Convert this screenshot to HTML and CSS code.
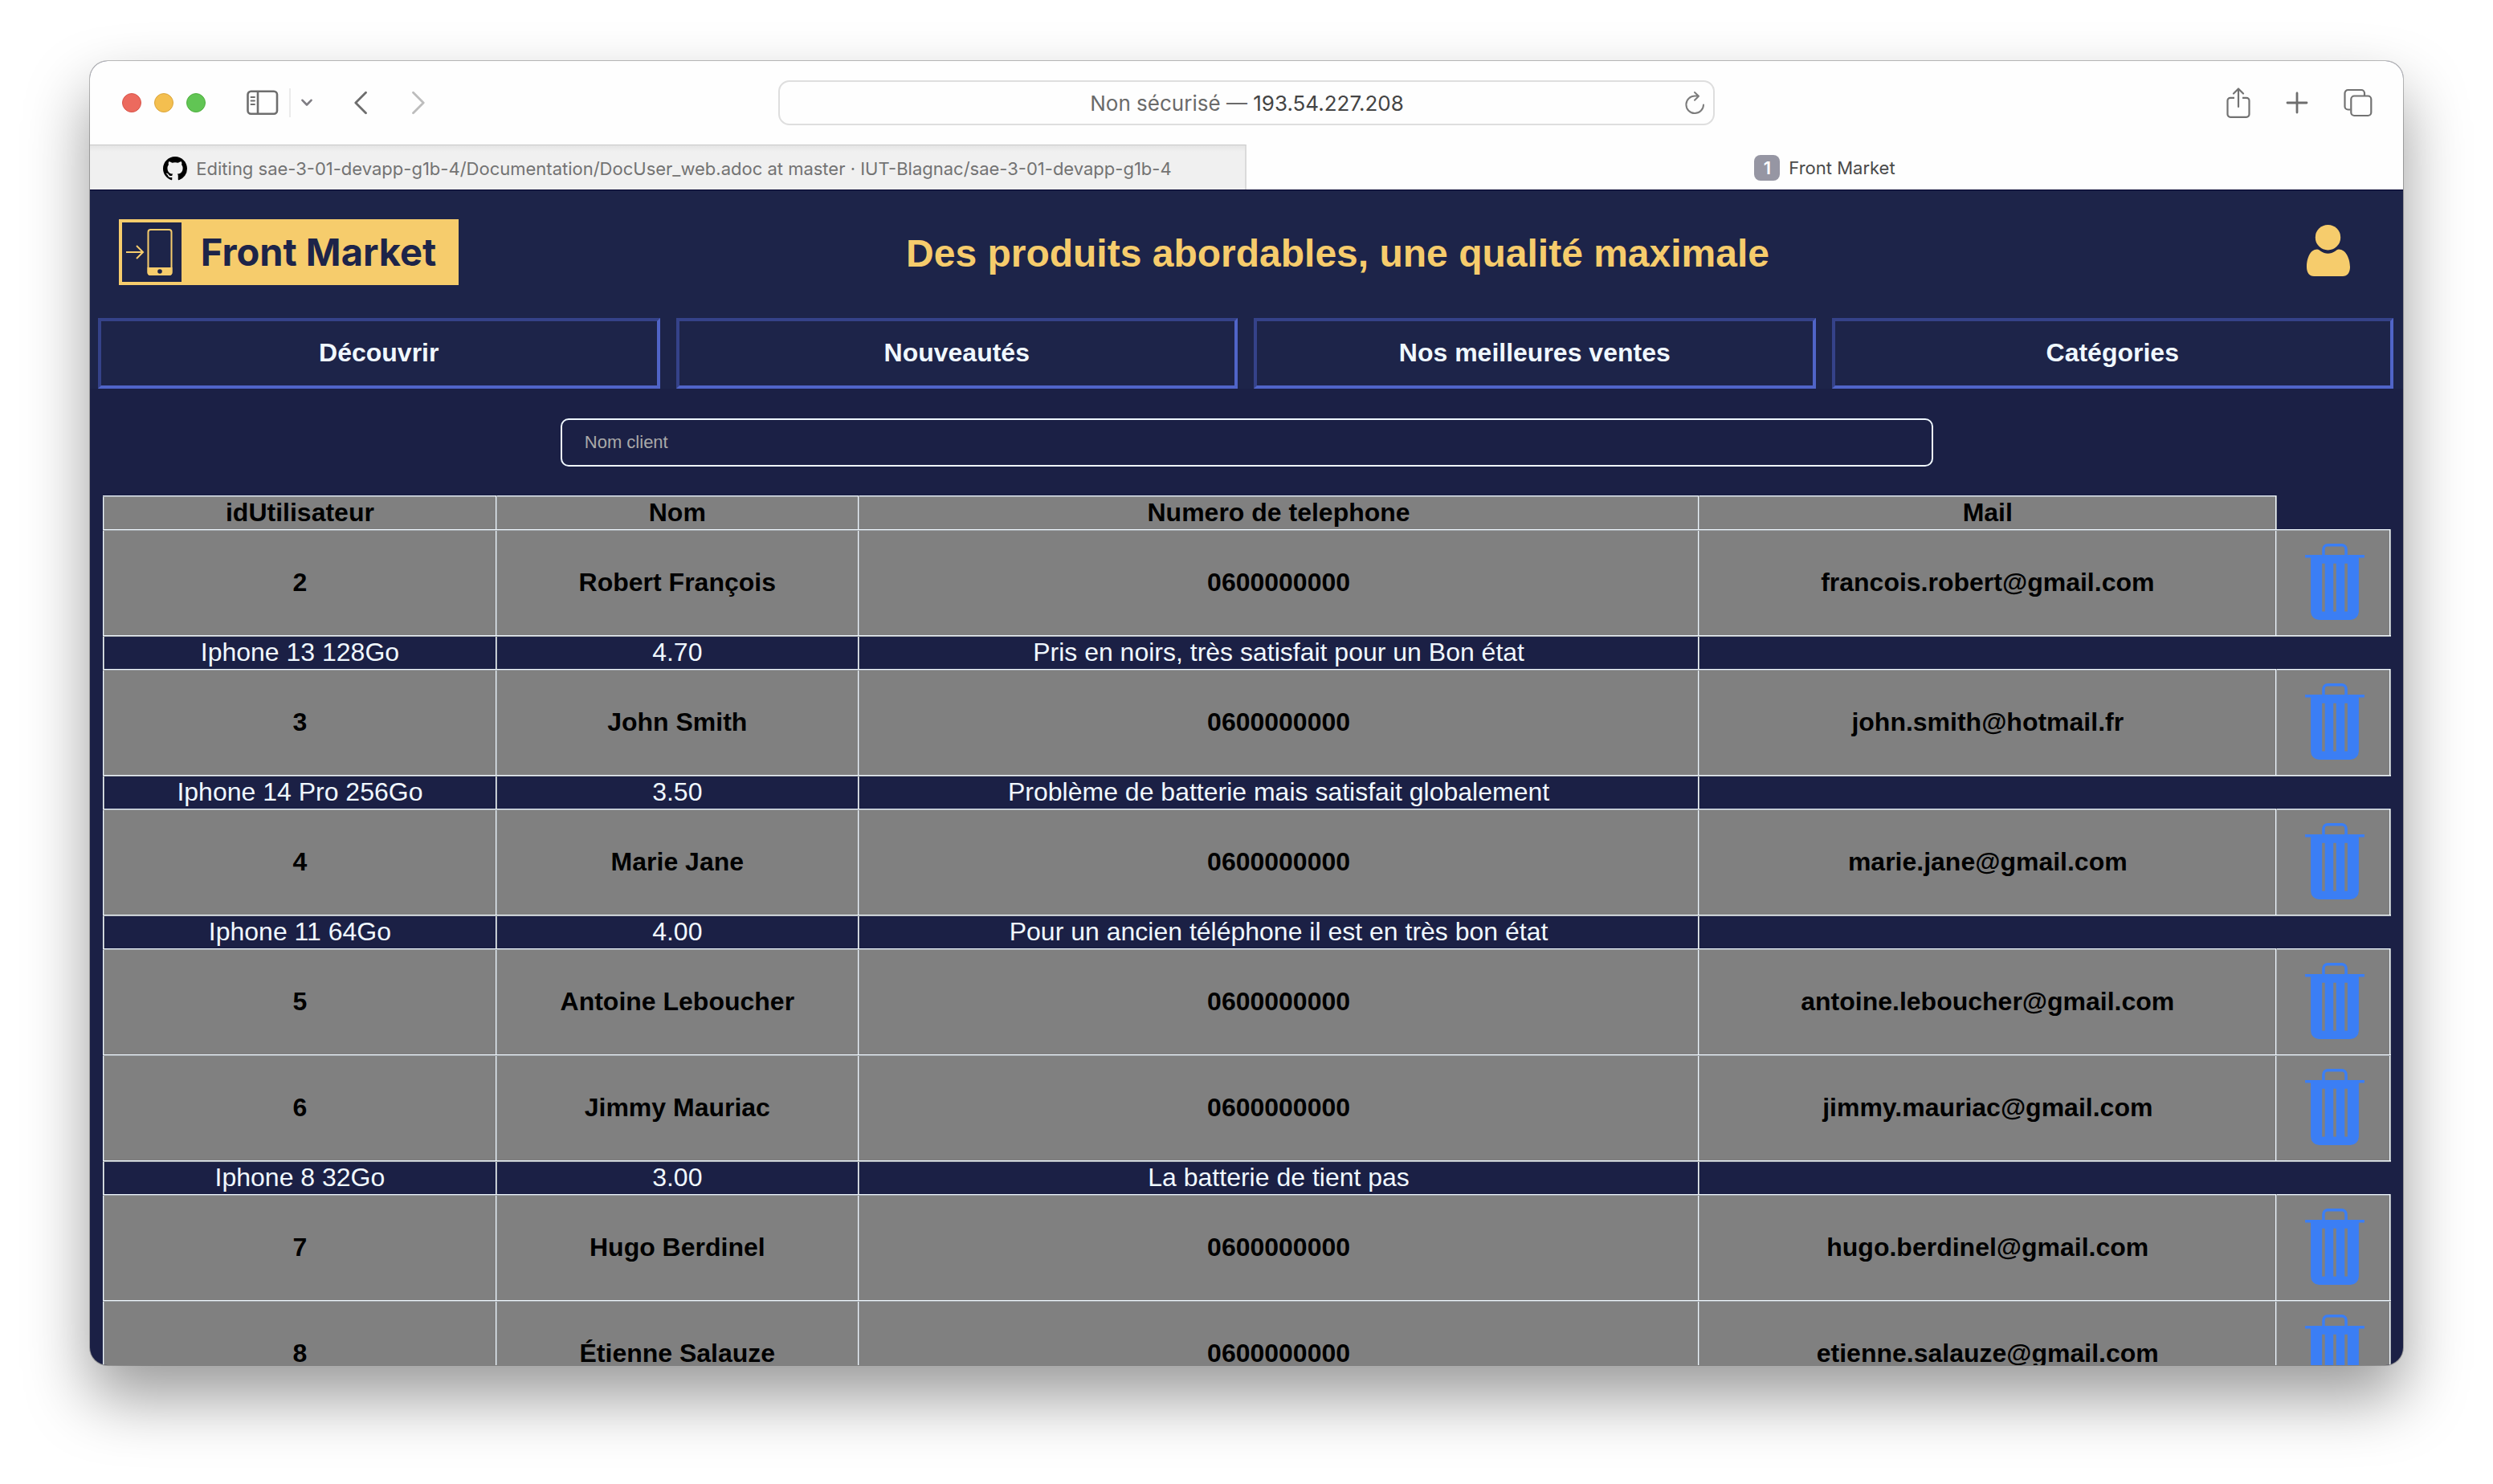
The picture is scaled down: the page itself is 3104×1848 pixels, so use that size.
FILE: index.html
```html
<!DOCTYPE html>
<html lang="fr">
<head>
<meta charset="utf-8">
<title>Front Market</title>
<link rel="stylesheet" href="styles.css">
</head>
<body>
<svg class="defs" aria-hidden="true">
  <symbol id="trash" viewBox="0 0 21 27">
    <path fill-rule="evenodd" d="M6 4V2a2 2 0 0 1 2-2h5a2 2 0 0 1 2 2v2h6v1h-2v19a3 3 0 0 1-3 3H5a3 3 0 0 1-3-3V5H0V4zM7 4h7V2a1 1 0 0 0-1-1H8a1 1 0 0 0-1 1zM6 7v17h1V7zM10 7v17h1V7zM14 7v17h1V7z"/>
  </symbol>
</svg>
<div class="window">
  <div class="toolbar">
    <div class="tools-left">
      <span class="lights"><i class="light red"></i><i class="light yellow"></i><i class="light green"></i></span>
      <button class="tool sidebar" aria-label="Barre latérale"><svg width="40" height="32" viewBox="0 0 40 32" fill="none" stroke="#6e6e6e" stroke-width="2.6"><rect x="1.5" y="1.8" width="36.5" height="28" rx="4"/><path d="M14 2v28"/><path d="M5.500 9h4.500M5.500 13.500h4.500M5.500 18h4.500" stroke-width="1.800" stroke-linecap="round"/></svg></button>
      <span class="divider"></span>
      <button class="tool chevron" aria-label="Groupes d'onglets"><svg width="14" height="10" viewBox="0 0 14 10" fill="none" stroke="#7f7d83" stroke-width="2.600" stroke-linecap="round" stroke-linejoin="round"><path d="M1.500 1.800L7 7.500l5.500-5.700"/></svg></button>
      <button class="tool back" aria-label="Précédent"><svg width="16" height="30" viewBox="0 0 16 30" fill="none" stroke="#6e6e6e" stroke-width="2.800" stroke-linecap="round" stroke-linejoin="round"><path d="M14.500 2.200L1.800 15l12.700 12.800"/></svg></button>
      <button class="tool forward" aria-label="Suivant"><svg width="16" height="30" viewBox="0 0 16 30" fill="none" stroke="#bdbdbd" stroke-width="2.800" stroke-linecap="round" stroke-linejoin="round"><path d="M1.500 2.200L14.200 15 1.500 27.800"/></svg></button>
    </div>
    <div class="address">
      <span class="url">Non sécurisé — <b>193.54.227.208</b></span>
      <button class="tool reload" aria-label="Actualiser"><svg width="26" height="30" viewBox="0 0 26 30" fill="none" stroke="#7c7c7c" stroke-width="2" stroke-linecap="round" stroke-linejoin="round"><path d="M23 17.500A10.800 10.800 0 1 1 12.500 6.500h4.500M12 2l5 4.700-5 5"/></svg></button>
    </div>
    <div class="tools-right">
      <button class="tool" aria-label="Partager"><svg width="30" height="38" viewBox="0 0 30 38" fill="none" stroke="#727272" stroke-width="2.200" stroke-linecap="round" stroke-linejoin="round"><path d="M10 12.800H5a3.500 3.500 0 0 0-3.500 3.500v17a3.500 3.500 0 0 0 3.500 3.500h20a3.500 3.500 0 0 0 3.500-3.500v-17a3.500 3.500 0 0 0-3.500-3.500h-5" stroke-linecap="butt"/><path d="M15 24V2M9 7.500L15 1.500l6 6"/></svg></button>
      <button class="tool" aria-label="Nouvel onglet"><svg width="28" height="28" viewBox="0 0 28 28" fill="none" stroke="#6e6e6e" stroke-width="2.800" stroke-linecap="round"><path d="M14 2v24M2 14h24"/></svg></button>
      <button class="tool" aria-label="Vue d'ensemble des onglets"><svg width="36" height="36" viewBox="0 0 36 36" fill="none" stroke="#727272" stroke-width="2.200"><rect x="9.300" y="9.500" width="25" height="24.500" rx="4"/><path d="M8.500 26.500H5.500a4 4 0 0 1-4-4V6a4 4 0 0 1 4-4h16.500a4 4 0 0 1 4 4v3"/></svg></button>
    </div>
  </div>
  <div class="tabs">
    <a class="tab inactive" href="#"><svg width="30" height="30" viewBox="0 0 16 16"><path d="M8 0C3.580 0 0 3.580 0 8c0 3.540 2.290 6.530 5.470 7.590.4.070.55-.17.55-.38 0-.19-.01-.82-.01-1.490-2.010.37-2.530-.49-2.690-.94-.09-.23-.48-.94-.82-1.130-.28-.15-.68-.52-.01-.53.63-.01 1.080.58 1.230.82.72 1.210 1.870.87 2.330.66.07-.52.28-.87.51-1.070-1.780-.2-3.640-.89-3.640-3.950 0-.87.31-1.590.82-2.150-.08-.2-.36-1.020.08-2.120 0 0 .67-.21 2.200.82.64-.18 1.320-.27 2-.27s1.360.09 2 .27c1.530-1.040 2.200-.82 2.200-.82.44 1.100.16 1.920.08 2.120.51.56.82 1.270.82 2.150 0 3.070-1.870 3.750-3.650 3.950.29.25.54.73.54 1.480 0 1.070-.01 1.930-.01 2.200 0 .21.15.46.55.38A8.010 8.010 0 0 0 16 8c0-4.420-3.580-8-8-8z"/></svg><span>Editing sae-3-01-devapp-g1b-4/Documentation/DocUser_web.adoc at master · IUT-Blagnac/sae-3-01-devapp-g1b-4</span></a>
    <a class="tab" href="#"><span class="badge">1</span><span>Front Market</span></a>
  </div>
  <div class="page">
    <header>
      <div class="banner">
        <a class="logo" href="#"><svg width="74" height="74" viewBox="0 0 74 74" fill="none" stroke="#f6cc6c" stroke-width="2"><path d="M5 37h21M18 29l8 8-8 8"/><rect x="32.500" y="9" width="29" height="56" rx="3"/><path d="M32.500 57h29v5a3 3 0 0 1-3 3h-23a3 3 0 0 1-3-3z" fill="#f6cc6c"/><circle cx="47" cy="61" r="2.800" fill="#1d2449" stroke="none"/></svg><span>Front Market</span></a>
        <h1>Des produits abordables, une qualité maximale</h1>
        <a class="account" href="#" aria-label="Compte"><svg width="54" height="64" viewBox="0 0 54 64" fill="#f6cc6c"><circle cx="26.500" cy="15.700" r="15.700"/><path d="M13 30.500c2 0 3 1.200 4.500 2.300 5.500 4 12.500 4 18 0 1.500-1.100 2.500-2.300 4.500-2.300 9 0 14 12 14 22 0 7-3.500 11.500-9 11.500H9c-5.500 0-9-4.500-9-11.500 0-10 4-22 13-22z"/></svg></a>
      </div>
      <nav>
        <a href="#">Découvrir</a>
        <a href="#">Nouveautés</a>
        <a href="#">Nos meilleures ventes</a>
        <a href="#">Catégories</a>
      </nav>
    </header>
    <main>
      <input class="search" type="text" placeholder="Nom client" aria-label="Nom client">
      <table>
        <colgroup><col class="c-id"><col class="c-name"><col class="c-phone"><col class="c-mail"><col class="c-del"></colgroup>
        <tr class="head"><th>idUtilisateur</th><th>Nom</th><th>Numero de telephone</th><th>Mail</th></tr>
        <tr class="user"><th>2</th><th>Robert François</th><th>0600000000</th><th>francois.robert@gmail.com</th><th class="action"><button class="del" aria-label="Supprimer"><svg width="74" height="95"><use href="#trash"/></svg></button></th></tr>
        <tr class="review"><td>Iphone 13 128Go</td><td>4.70</td><td>Pris en noirs, très satisfait pour un Bon état</td></tr>
        <tr class="user"><th>3</th><th>John Smith</th><th>0600000000</th><th>john.smith@hotmail.fr</th><th class="action"><button class="del" aria-label="Supprimer"><svg width="74" height="95"><use href="#trash"/></svg></button></th></tr>
        <tr class="review"><td>Iphone 14 Pro 256Go</td><td>3.50</td><td>Problème de batterie mais satisfait globalement</td></tr>
        <tr class="user"><th>4</th><th>Marie Jane</th><th>0600000000</th><th>marie.jane@gmail.com</th><th class="action"><button class="del" aria-label="Supprimer"><svg width="74" height="95"><use href="#trash"/></svg></button></th></tr>
        <tr class="review"><td>Iphone 11 64Go</td><td>4.00</td><td>Pour un ancien téléphone il est en très bon état</td></tr>
        <tr class="user"><th>5</th><th>Antoine Leboucher</th><th>0600000000</th><th>antoine.leboucher@gmail.com</th><th class="action"><button class="del" aria-label="Supprimer"><svg width="74" height="95"><use href="#trash"/></svg></button></th></tr>
        <tr class="user"><th>6</th><th>Jimmy Mauriac</th><th>0600000000</th><th>jimmy.mauriac@gmail.com</th><th class="action"><button class="del" aria-label="Supprimer"><svg width="74" height="95"><use href="#trash"/></svg></button></th></tr>
        <tr class="review"><td>Iphone 8 32Go</td><td>3.00</td><td>La batterie de tient pas</td></tr>
        <tr class="user"><th>7</th><th>Hugo Berdinel</th><th>0600000000</th><th>hugo.berdinel@gmail.com</th><th class="action"><button class="del" aria-label="Supprimer"><svg width="74" height="95"><use href="#trash"/></svg></button></th></tr>
        <tr class="user"><th>8</th><th>Étienne Salauze</th><th>0600000000</th><th>etienne.salauze@gmail.com</th><th class="action"><button class="del" aria-label="Supprimer"><svg width="74" height="95"><use href="#trash"/></svg></button></th></tr>
      </table>
    </main>
  </div>
</div>
</body>
</html>
```
FILE: styles.css
```css
* { box-sizing: border-box; }

body {
  margin: 0;
  height: 100vh;
  padding: 76px 112px 148px;
  overflow: hidden;
  background: #fff;
  font-family: "Liberation Sans", Arial, sans-serif;
}

a { color: inherit; text-decoration: none; }
svg { display: block; }
.defs { position: absolute; width: 0; height: 0; }

.window {
  display: flex;
  flex-direction: column;
  height: 100%;
  overflow: hidden;
  border-radius: 22px;
  background: #1b2045;
  box-shadow: 0 0 0 1px rgba(0, 0, 0, .25), 0 40px 80px rgba(0, 0, 0, .4);
}

/* Browser toolbar */
.toolbar {
  display: grid;
  grid-template-columns: 1fr 40.5% 1fr;
  align-items: center;
  flex: none;
  height: 104px;
  background: #fefefe;
  font-family: Inter, sans-serif;
}

.tools-left, .tools-right { display: flex; align-items: center; }
.tools-left { padding-left: 40px; }
.tools-right { justify-content: flex-end; gap: 44px; padding-right: 38px; }

.lights { display: flex; gap: 16px; }
.light { width: 24px; height: 24px; border-radius: 50%; border: 1px solid; }
.red { background: #ec6a5e; border-color: #d9544a; }
.yellow { background: #f4bf4f; border-color: #dba53a; }
.green { background: #61c554; border-color: #4fae3f; }

.tool { padding: 0; border: 0; background: none; }
.sidebar { margin-left: 51px; }
.divider { width: 2px; height: 36px; margin: 0 13px; background: #ebebeb; }
.back { margin-left: 52px; }
.forward { margin-left: 56px; }

.address {
  display: flex;
  align-items: center;
  height: 56px;
  padding: 0 9px 0 36px;
  border: 2px solid #dedede;
  border-radius: 14px;
  font-size: 26px;
  color: #6a6a6a;
}
.url { flex: 1; text-align: center; }
.url b { font-weight: 400; color: #444; }

.tabs {
  display: grid;
  grid-template-columns: 1fr 1fr;
  flex: none;
  height: 56px;
  background: #fefefe;
  font-family: Inter, sans-serif;
  font-size: 22px;
  color: #4a4a4a;
}
.tab {
  display: flex;
  align-items: center;
  justify-content: center;
  gap: 11px;
  padding-top: 2px;
  white-space: nowrap;
}
.inactive {
  color: #737373;
  background: linear-gradient(#e4e4e4, #f0f0f0 8px);
  border-top: 1px solid #c8c8c8;
  border-right: 2px solid #dadada;
}
.badge {
  width: 32px;
  height: 32px;
  border-radius: 8px;
  background: #9696a3;
  color: #fff;
  font-weight: 600;
  line-height: 32px;
  text-align: center;
}

/* Shop page */
.page { flex: 1; min-height: 0; overflow: hidden; border-top: 1px solid #00002c; }

header { background: #1d2449; }

.banner {
  display: flex;
  align-items: center;
  justify-content: space-between;
  height: 159px;
  padding: 0 66px 6px 36px;
}
.logo {
  display: flex;
  align-items: center;
  width: 423px;
  height: 82px;
  border: 4px solid #f6cc6c;
  background: #f6cc6c;
  color: #1d2449;
  font: 700 47px Inter, sans-serif;
}
.logo svg { background: #1d2449; }
.logo span { flex: 1; text-align: center; }

h1 { margin: 0; padding-top: 4px; color: #f6cc6c; font-size: 48px; }
.account { padding: 0 0 4px 112px; }

nav {
  display: grid;
  grid-template-columns: repeat(4, 1fr);
  gap: 20px;
  padding: 0 12px 0 10px;
}
nav a {
  padding-bottom: 2px;
  border: 4px solid;
  border-color: #354289 #5064c8 #5064c8 #354289;
  color: aliceblue;
  font-size: 32px;
  font-weight: 700;
  line-height: 78px;
  text-align: center;
}

main { padding: 37px 15px 0 16px; }

.search {
  display: block;
  width: 60%;
  height: 60px;
  margin: 0 auto 36px;
  padding: 0 28px;
  border: 2px solid aliceblue;
  border-radius: 10px;
  background: transparent;
  color: aliceblue;
  font: 22px "Liberation Sans", Arial, sans-serif;
}
.search::placeholder { color: #a9a9a9; opacity: 1; }

table {
  width: 100%;
  table-layout: fixed;
  border-collapse: collapse;
  font-size: 32px;
  text-align: center;
}
.c-id { width: 17.17%; }
.c-name { width: 15.84%; }
.c-phone { width: 36.76%; }
.c-mail { width: 25.25%; }
.c-del { width: 4.98%; }

th, td {
  padding: 0 0 2px;
  border: 2px ridge aliceblue;
  line-height: 38px;
}
th { background: #808080; color: #000; }
td { color: aliceblue; }
.user { height: 132px; }
.action { padding: 0 0 4px 3px; }
.del { padding: 0; border: 0; background: none; vertical-align: middle; }
.del svg { fill: #3b7ef4; }
```
